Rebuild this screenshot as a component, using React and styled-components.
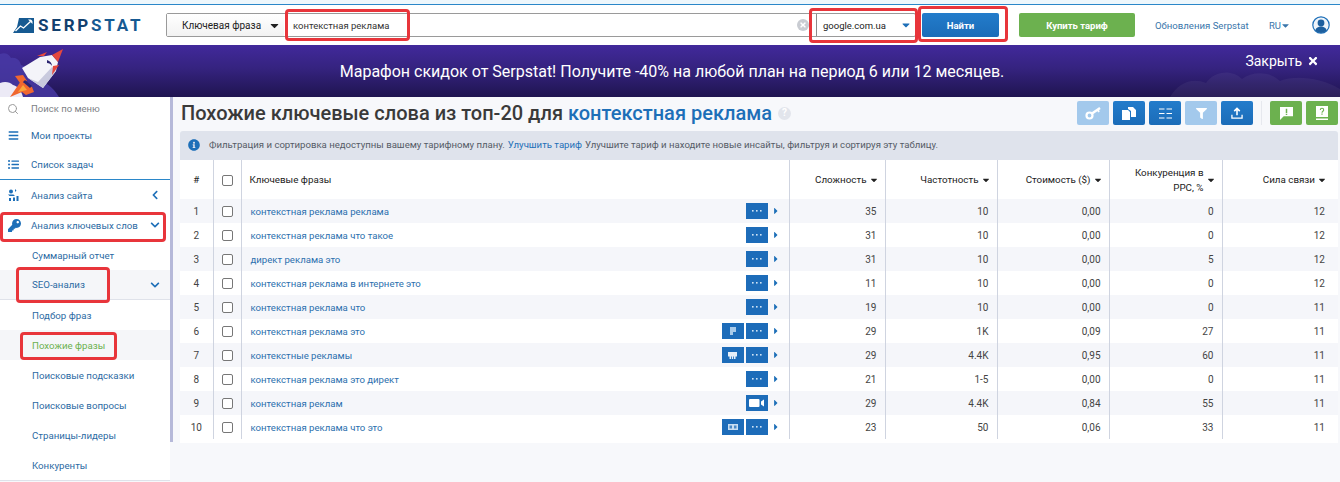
import React from 'react';
import styled, { createGlobalStyle } from 'styled-components';
import { Search } from 'lucide-react';
import { FaKey, FaBars, FaListUl, FaChevronLeft, FaChevronDown, FaFilter, FaTimes, FaInfoCircle, FaCaretDown, FaCaretRight } from 'react-icons/fa';

const GlobalStyle = createGlobalStyle`
  html, body {
    margin: 0;
    padding: 0;
    height: 482px;
    overflow: hidden;
    background: #fff;
    font-family: Roboto, "Liberation Sans", sans-serif;
  }
  * { box-sizing: border-box; }
`;

const Page = styled.div`
  width: 1340px;
  height: 482px;
  display: flex;
  flex-direction: column;
  overflow: hidden;
`;

const TopStrip = styled.div`
  height: 5px;
  flex: none;
  background: #eef7fc;
  border-bottom: 1px solid #2b87c9;
`;

const Header = styled.header`
  height: 40px;
  flex: none;
  display: flex;
  align-items: center;
  padding: 0 12px 0 13px;
  background: #fff;
`;

const Logo = styled.div`
  width: 153px;
  flex: none;
  display: flex;
  align-items: center;
  gap: 4px;
`;

const LogoText = styled.span`
  font: 700 17px/1 Roboto, sans-serif;
  letter-spacing: 2.8px;
  color: #12406e;
  b { color: #165a92; font-weight: 700; }
`;

const SearchBar = styled.div`
  width: 750px;
  height: 24px;
  flex: none;
  display: flex;
  align-items: stretch;
  border: 1px solid #9a9a9a;
  border-radius: 2px;
`;

const TypeSelect = styled.div`
  width: 117px;
  flex: none;
  display: flex;
  align-items: center;
  justify-content: space-between;
  padding: 0 3px 0 15px;
  font-size: 10px;
  color: #222;
  background: linear-gradient(#fff, #f2f2f2);
  svg { font-size: 13px; color: #222; }
`;

const SearchInput = styled.div`
  flex: 1;
  display: flex;
  align-items: center;
  padding-left: 9px;
  font-size: 9.5px;
  color: #333;
  position: relative;
`;

const ClearDot = styled.span`
  position: absolute;
  right: 7px;
  top: 5px;
  width: 12px;
  height: 12px;
  border-radius: 50%;
  background: #c9ccd2;
  color: #fff;
  font-size: 8px;
  display: flex;
  align-items: center;
  justify-content: center;
`;

const DomainSelect = styled.div`
  width: 99px;
  flex: none;
  display: flex;
  align-items: center;
  justify-content: space-between;
  padding: 0 3px 0 6px;
  font-size: 9.5px;
  color: #222;
  border-left: 1px solid #8c8c8c;
  position: relative;
  svg { font-size: 12px; color: #1d6fb8; }
`;

const Mark = styled.span`
  position: absolute;
  top: ${p => p.$top}px;
  left: ${p => p.$left}px;
  width: ${p => p.$w}px;
  height: ${p => p.$h}px;
  border: 3px solid #e8353b;
  border-radius: 4px;
  pointer-events: none;
  z-index: 5;
`;

const FindButton = styled.button`
  width: 77px;
  height: 24px;
  flex: none;
  margin-left: 6px;
  border: 0;
  border-radius: 2px;
  background: linear-gradient(#237ccb, #1b6cb8);
  color: #fff;
  font: 700 9.5px Roboto, sans-serif;
  position: relative;
`;

const BuyButton = styled.button`
  width: 116px;
  height: 24px;
  flex: none;
  margin-left: 20px;
  border: 0;
  border-radius: 2px;
  background: #6cb14f;
  color: #fff;
  font: 700 9.5px Roboto, sans-serif;
`;

const UpdatesLink = styled.a`
  margin-left: 20px;
  width: 93px;
  font-size: 9.6px;
  color: #3a76ab;
  white-space: nowrap;
`;

const Lang = styled.span`
  margin-left: 21px;
  display: flex;
  align-items: center;
  font-size: 9.5px;
  color: #3a76ab;
  svg { font-size: 11px; margin-left: -1px; }
`;

const Avatar = styled.svg`
  margin-left: 21px;
  width: 18px;
  height: 18px;
  flex: none;
`;

const Banner = styled.div`
  height: 52px;
  flex: none;
  display: flex;
  align-items: center;
  justify-content: center;
  position: relative;
  overflow: hidden;
  background: linear-gradient(#41299b, #35237f 45%, #1f1450);
  color: #fff;
  font-size: 16px;
  padding-left: 4px;
`;

const RocketArt = styled.svg`
  position: absolute;
  left: 0;
  top: 0;
  width: 75px;
  height: 52px;
`;

const BannerClouds = styled.svg`
  position: absolute;
  right: 0;
  bottom: 0;
  width: 170px;
  height: 28px;
`;

const CloseBanner = styled.span`
  position: absolute;
  right: 21px;
  top: 8px;
  display: flex;
  align-items: center;
  gap: 5px;
  font-size: 14px;
  svg { font-size: 12px; }
`;

const Body = styled.div`
  flex: 1;
  min-height: 0;
  display: flex;
  background: #f7f8fb;
`;

const Sidebar = styled.nav`
  width: 170px;
  flex: none;
  background: #fff;
  border-bottom: 1px solid #dfe2ea;
  height: 384px;
`;

const ScrollThumb = styled.div`
  width: 3px;
  height: 345px;
  flex: none;
  background: #b6b9d9;
`;

const MenuSearch = styled.div`
  height: 23px;
  display: flex;
  align-items: center;
  gap: 12px;
  padding-left: 7px;
  font-size: 9.5px;
  color: #7d7f85;
  svg { color: #9a9a9a; }
`;

const MenuItem = styled.div`
  height: 30px;
  display: flex;
  align-items: center;
  position: relative;
  padding-left: ${p => (p.$sub ? 32 : 8)}px;
  padding-right: 10px;
  font-size: 9.7px;
  font-weight: 400;
  color: ${p => (p.$active ? '#6cb14f' : '#2b6aa3')};
  background: ${p => (p.$shade ? '#f5f6f9' : '#fff')};
  border-bottom: ${p => (p.$line ? `1px solid ${p.$line}` : '0')};
`;

const MenuIcon = styled.span`
  width: 23px;
  flex: none;
  display: flex;
  align-items: center;
  color: #1d6fb8;
  font-size: 11px;
`;

const MenuArrow = styled.span`
  margin-left: auto;
  display: flex;
  color: #1d6fb8;
  font-size: 10px;
`;

const Main = styled.main`
  flex: 1;
  min-width: 0;
  padding: 4px 2px 0 7px;
`;

const TitleRow = styled.div`
  height: 30px;
  display: flex;
  align-items: flex-start;
  justify-content: space-between;
`;

const Title = styled.h1`
  margin: 0 0 0 1px;
  display: flex;
  align-items: center;
  font-size: 20px;
  line-height: 24px;
  font-weight: 500;
  color: #3a3a3a;
  white-space: pre;
  b { font-weight: 500; color: #1d6fb8; }
`;

const TitleHint = styled.span`
  margin-left: 6px;
  width: 13px;
  height: 13px;
  border-radius: 50%;
  background: #e2e5ec;
  color: #fff;
  font-size: 10px;
  font-weight: 700;
  display: flex;
  align-items: center;
  justify-content: center;
`;

const Toolbar = styled.div`
  display: flex;
  align-items: center;
  gap: 4px;
`;

const ToolButton = styled.span`
  width: 32px;
  height: 24px;
  display: flex;
  align-items: center;
  justify-content: center;
  border-radius: 2px;
  color: #fff;
  font-size: 11px;
  background: ${p => (p.$green ? '#6cb14f' : p.$muted ? '#a3c9ec' : 'linear-gradient(#237ccb, #1b6cb8)')};
`;

const ToolDivider = styled.span`
  width: 1px;
  height: 24px;
  margin: 0 4px;
  background: #e6e8ee;
`;

const Notice = styled.div`
  height: 29px;
  display: flex;
  align-items: center;
  padding: 0 0 2px 8px;
  border-radius: 3px 3px 0 0;
  background: #dfe3ec;
  font-size: 9.6px;
  color: #555b66;
  svg { font-size: 12px; color: #1d6fb8; margin-right: 9px; }
  a { color: #1d6fb8; margin: 0 3px; }
`;

const Table = styled.table`
  width: 1158px;
  table-layout: fixed;
  border-collapse: collapse;
  background: #fff;
`;

const Th = styled.th`
  height: 39px;
  padding: 0 ${p => (p.$align ? 8 : 6)}px 0 8px;
  font-size: 9.8px;
  font-weight: 400;
  line-height: 15px;
  color: #222;
  text-align: ${p => p.$align || 'right'};
  border-right: 1px solid #cfd4e0;
  &:last-child { border-right: 0; padding-right: 11px; }
`;

const HeadCell = styled.div`
  display: flex;
  align-items: center;
  justify-content: flex-end;
  gap: 2px;
  svg { font-size: 10px; color: #222; flex: none; }
`;

const Tr = styled.tr`
  height: 24px;
  &:nth-child(odd) { background: #f5f6fa; }
`;

const Td = styled.td`
  padding: 0 8px;
  font-size: 10px;
  color: #444;
  text-align: ${p => p.$align || 'right'};
  border-right: 1px solid #cfd4e0;
  &:last-child { border-right: 0; padding-right: 13px; }
`;

const PhraseCell = styled.div`
  display: flex;
  align-items: center;
  padding-left: 1px;
  font-size: 9.6px;
  color: #2b6fae;
`;

const RowActions = styled.div`
  margin-left: auto;
  display: flex;
  align-items: center;
  gap: 2px;
  > svg { font-size: 10px; color: #1d6fb8; margin-left: 1px; }
`;

const RowButton = styled.span`
  width: 22px;
  height: 16px;
  display: flex;
  align-items: center;
  justify-content: center;
  background: #1d6cb9;
`;

const Check = styled.span`
  display: block;
  width: 11px;
  height: 11px;
  margin: 1px auto 0;
  background: #fff;
  border: 1px solid #777;
  border-radius: 2px;
`;

const TableEnd = styled.div`
  height: 4px;
  width: 1158px;
  background: #fff;
`;

const DotsIcon = () => (
  <svg width="10" height="2" viewBox="0 0 10 2" fill="#cfe3f5"><rect width="1.6" height="1.6" /><rect x="4" width="1.6" height="1.6" /><rect x="8" width="1.6" height="1.6" /></svg>
);

const AdIcon = () => (
  <svg width="6" height="8" viewBox="0 0 6 8"><path d="M0 0h6v5H3v3H0z" fill="#a9cbea" /></svg>
);

const ImageIcon = () => (
  <svg width="9" height="7" viewBox="0 0 9 7"><path d="M0 0h9v4.500H7.500V7H6V4.500H5.200V7H3.800V4.500H3V7H1.500V4.500H0z" fill="#e6eff8" /></svg>
);

const VideoIcon = () => (
  <svg width="15" height="8" viewBox="0 0 15 8"><rect width="10.500" height="8" rx="1" fill="#fff" /><path d="M12 2.500 15 .5v7l-3-2z" fill="#fff" /></svg>
);

const CardIcon = () => (
  <svg width="10" height="6" viewBox="0 0 10 6"><path d="M0 0h10v6H0z" fill="#c9def2" /><path d="M1.500 1.500h2.500v3H1.500zM6 1.500h2.500v3H6z" fill="#4a89c6" /></svg>
);

const LogoMark = () => (
  <svg width="21" height="15" viewBox="0 0 21 15">
    <path d="M6 0h15v15H0l4-6z" fill="#165a92" />
    <path d="M2.500 13 7.500 8l3 2 7-6.500" fill="none" stroke="#fff" strokeWidth="1.300" />
    <path d="M15 1.500h4.500V6z" fill="#fff" />
    <path d="M16.500 0H21v4.500z" fill="#165a92" />
  </svg>
);

const Rocket = () => (
  <RocketArt viewBox="0 0 75 52">
    <path d="M0 9c5-2 9 0 11 4 5-1 9 2 10 7 8 2 12 8 14 14 10 2 18 8 24 18H0z" fill="#4a3ba8" opacity=".8" />
    <path d="M0 38c5-2 10-1 13 2 4 1 8 4 10 12H0z" fill="#eceaf6" />
    <path d="M15 31l8-1 4 6-7 2z" fill="#f0672f" />
    <path d="M21 36 10 52l12-5 4 3 8-3-2-5z" fill="#f0672f" />
    <path d="M23 40l-5 7 9-2z" fill="#f9a63a" />
    <path d="M25 35l7 6-2 2-7-6z" fill="#2b2570" />
    <path d="M37 11l10-4-3 4z" fill="#e5483d" />
    <path d="M22 23 40 12l12-2 6 7-2 9-13 17-15-10z" fill="#f4f4f9" />
    <path d="M28 33l15 10 13-17-4-4-14 15z" fill="#c9cade" />
    <path d="M52 10l11-6-5 13z" fill="#e5483d" />
    <path d="M53 21l6-1-7 10z" fill="#e5483d" />
    <path d="M47 15c3 1 5 3 5 6-1-2-3-3-5-3z" fill="#2b2570" />
  </RocketArt>
);

const ToolKeyIcon = () => (
  <svg width="17" height="14" viewBox="0 0 17 14" fill="none" stroke="#fff">
    <circle cx="4.500" cy="9.500" r="3" strokeWidth="2.200" />
    <path d="M7 7.500 15 2" strokeWidth="2.400" />
    <path d="M12.500 3.500l1.500 2.500" strokeWidth="1.800" />
  </svg>
);

const CopyIcon = () => (
  <svg width="14" height="14" viewBox="0 0 14 14">
    <path d="M0 4h6l2 2v8H0z" fill="#fff" />
    <path d="M6 1h5l3 3v7H9V5L6 3z" fill="#fff" />
  </svg>
);

const ColumnsIcon = () => (
  <svg width="13" height="11" viewBox="0 0 13 11" fill="none" stroke="#fff" strokeWidth="1.200">
    <path d="M0 1h5.500M7.500 1H13M0 5.500h5.500M7.500 5.500H13M0 10h5.500M7.500 10H13" />
  </svg>
);

const UploadIcon = () => (
  <svg width="12" height="12" viewBox="0 0 13 13" fill="none" stroke="#fff" strokeWidth="1.700">
    <path d="M6.500 9V2M3.500 4.500l3-3 3 3" />
    <path d="M1 8.500v3.500h11V8.500" strokeWidth="1.400" />
  </svg>
);

const FeedbackIcon = () => (
  <svg width="13" height="13" viewBox="0 0 14 14">
    <path d="M0 0h14v10H4l-4 4z" fill="#fff" />
    <path d="M6.200 2h1.600v4.400H6.200zM6.200 7.200h1.600v1.500H6.200z" fill="#6cb14f" />
  </svg>
);

const GuideIcon = () => (
  <svg width="12" height="15" viewBox="0 0 12 15">
    <path d="M0 0h12v11H0z" fill="#fff" />
    <path d="M0 12.500h12V14H0z" fill="#fff" />
    <path d="M4.300 4c0-1 .8-1.700 1.700-1.700S7.700 3 7.700 4c0 1.200-1.700 1.300-1.700 2.800" fill="none" stroke="#6cb14f" strokeWidth="1.100" />
    <path d="M5.400 7.600h1.200v1.200H5.400z" fill="#6cb14f" />
  </svg>
);

const SiteIcon = () => (
  <svg width="11" height="12" viewBox="0 0 11 12" fill="#1d6fb8">
    <circle cx="3" cy="2.500" r="2" />
    <path d="M7 0l1.500 1.500L7 3zM0 5.500h5.500L7 7H1.500zM1 9h2v3H1zM5 8.500h2V12H5zM8.500 7h2v5h-2z" />
  </svg>
);

const menu = [
  { label: 'Мои проекты', icon: <FaBars /> },
  { label: 'Список задач', icon: <FaListUl />, line: '#2b87c9' },
  { label: 'Анализ сайта', icon: <SiteIcon />, arrow: <FaChevronLeft /> },
  { label: 'Анализ ключевых слов', icon: <FaKey style={{ fontSize: 13 }} />, arrow: <FaChevronDown />, mark: { $top: 2, $left: 0, $w: 166, $h: 30 } },
  { label: 'Суммарный отчет', sub: true },
  { label: 'SEO-анализ', sub: true, shade: true, line: '#dfe2ea', arrow: <FaChevronDown />, mark: { $top: -3, $left: 16, $w: 94, $h: 36 } },
  { label: 'Подбор фраз', sub: true },
  { label: 'Похожие фразы', sub: true, shade: true, active: true, mark: { $top: 2, $left: 20, $w: 97, $h: 28 } },
  { label: 'Поисковые подсказки', sub: true },
  { label: 'Поисковые вопросы', sub: true },
  { label: 'Страницы-лидеры', sub: true },
  { label: 'Конкуренты', sub: true },
];

const rows = [
  ['контекстная реклама реклама', 35, '10', '0,00', 0, 12],
  ['контекстная реклама что такое', 31, '10', '0,00', 0, 12],
  ['директ реклама это', 31, '10', '0,00', 5, 12],
  ['контекстная реклама в интернете это', 11, '10', '0,00', 0, 12],
  ['контекстная реклама что', 19, '10', '0,00', 0, 11],
  ['контекстная реклама это', 29, '1K', '0,09', 27, 11, 'ad'],
  ['контекстные рекламы', 29, '4.4K', '0,95', 60, 11, 'image'],
  ['контекстная реклама это директ', 21, '1-5', '0,00', 0, 11],
  ['контекстная реклам', 29, '4.4K', '0,84', 55, 11, 'video'],
  ['контекстная реклама что это', 23, '50', '0,06', 33, 11, 'card'],
];

const extraIcons = { ad: <AdIcon />, image: <ImageIcon />, card: <CardIcon /> };

export default function App() {
  return (
    <Page>
      <GlobalStyle />
      <TopStrip />
      <Header>
        <Logo>
          <LogoMark />
          <LogoText>SERP<b>STAT</b></LogoText>
        </Logo>
        <SearchBar>
          <TypeSelect>Ключевая фраза <FaCaretDown /></TypeSelect>
          <SearchInput>
            контекстная реклама
            <ClearDot><FaTimes /></ClearDot>
            <Mark $top={-5} $left={1} $w={125} $h={32} />
          </SearchInput>
          <DomainSelect>
            google.com.ua <FaCaretDown />
            <Mark $top={-6} $left={-8} $w={109} $h={35} />
          </DomainSelect>
        </SearchBar>
        <FindButton>
          Найти
          <Mark $top={-7} $left={-4} $w={90} $h={36} />
        </FindButton>
        <BuyButton>Купить тариф</BuyButton>
        <UpdatesLink>Обновления Serpstat</UpdatesLink>
        <Lang>RU<FaCaretDown /></Lang>
        <Avatar viewBox="0 0 18 18">
          <circle cx="9" cy="9" r="8.200" fill="#eef4fa" stroke="#1d6fb8" strokeWidth="1.200" />
          <circle cx="9" cy="7" r="3.400" fill="#1d5f9e" />
          <path d="M3.200 14.600c1-3 3.200-4 5.800-4s4.800 1 5.800 4a8 8 0 0 1-11.600 0z" fill="#1d5f9e" />
        </Avatar>
      </Header>
      <Banner>
        <Rocket />
        <BannerClouds viewBox="0 0 170 28">
          <path d="M0 28c8-14 22-20 36-14 8-12 26-14 36-4 10-8 28-8 38 2 14-6 40-4 60 8v8z" fill="#ffffff" opacity=".05" />
        </BannerClouds>
        Марафон скидок от Serpstat! Получите -40% на любой план на период 6 или 12 месяцев.
        <CloseBanner>Закрыть <FaTimes /></CloseBanner>
      </Banner>
      <Body>
        <Sidebar>
          <MenuSearch><Search size={12} strokeWidth={2} />Поиск по меню</MenuSearch>
          {menu.map(item => (
            <MenuItem key={item.label} $sub={item.sub} $shade={item.shade} $active={item.active} $line={item.line}>
              {item.icon && <MenuIcon>{item.icon}</MenuIcon>}
              {item.label}
              {item.arrow && <MenuArrow>{item.arrow}</MenuArrow>}
              {item.mark && <Mark {...item.mark} />}
            </MenuItem>
          ))}
        </Sidebar>
        <ScrollThumb />
        <Main>
          <TitleRow>
            <Title>
              Похожие ключевые слова из топ-20 для <b>контекстная реклама</b>
              <TitleHint>?</TitleHint>
            </Title>
            <Toolbar>
              <ToolButton $muted><ToolKeyIcon /></ToolButton>
              <ToolButton><CopyIcon /></ToolButton>
              <ToolButton><ColumnsIcon /></ToolButton>
              <ToolButton $muted><FaFilter /></ToolButton>
              <ToolButton><UploadIcon /></ToolButton>
              <ToolDivider />
              <ToolButton $green><FeedbackIcon /></ToolButton>
              <ToolButton $green><GuideIcon /></ToolButton>
            </Toolbar>
          </TitleRow>
          <Notice>
            <FaInfoCircle />
            Фильтрация и сортировка недоступны вашему тарифному плану.
            <a>Улучшить тариф</a>
            Улучшите тариф и находите новые инсайты, фильтруя и сортируя эту таблицу.
          </Notice>
          <Table>
            <colgroup>
              <col width="33" /><col width="28" /><col width="548" /><col width="96" />
              <col width="112" /><col width="112" /><col width="113" /><col width="116" />
            </colgroup>
            <thead>
              <tr>
                <Th $align="center">#</Th>
                <Th $align="center"><Check /></Th>
                <Th $align="left">Ключевые фразы</Th>
                <Th><HeadCell>Сложность<FaCaretDown /></HeadCell></Th>
                <Th><HeadCell>Частотность<FaCaretDown /></HeadCell></Th>
                <Th><HeadCell>Стоимость ($)<FaCaretDown /></HeadCell></Th>
                <Th><HeadCell><span>Конкуренция в<br />PPC, %</span><FaCaretDown /></HeadCell></Th>
                <Th><HeadCell>Сила связи<FaCaretDown /></HeadCell></Th>
              </tr>
            </thead>
            <tbody>
              {rows.map((r, i) => (
                <Tr key={r[0]}>
                  <Td $align="center">{i + 1}</Td>
                  <Td $align="center"><Check /></Td>
                  <Td $align="left">
                    <PhraseCell>
                      {r[0]}
                      <RowActions>
                        {extraIcons[r[6]] && <RowButton>{extraIcons[r[6]]}</RowButton>}
                        <RowButton>{r[6] === 'video' ? <VideoIcon /> : <DotsIcon />}</RowButton>
                        <FaCaretRight />
                      </RowActions>
                    </PhraseCell>
                  </Td>
                  <Td>{r[1]}</Td>
                  <Td>{r[2]}</Td>
                  <Td>{r[3]}</Td>
                  <Td>{r[4]}</Td>
                  <Td>{r[5]}</Td>
                </Tr>
              ))}
            </tbody>
          </Table>
          <TableEnd />
        </Main>
      </Body>
    </Page>
  );
}
